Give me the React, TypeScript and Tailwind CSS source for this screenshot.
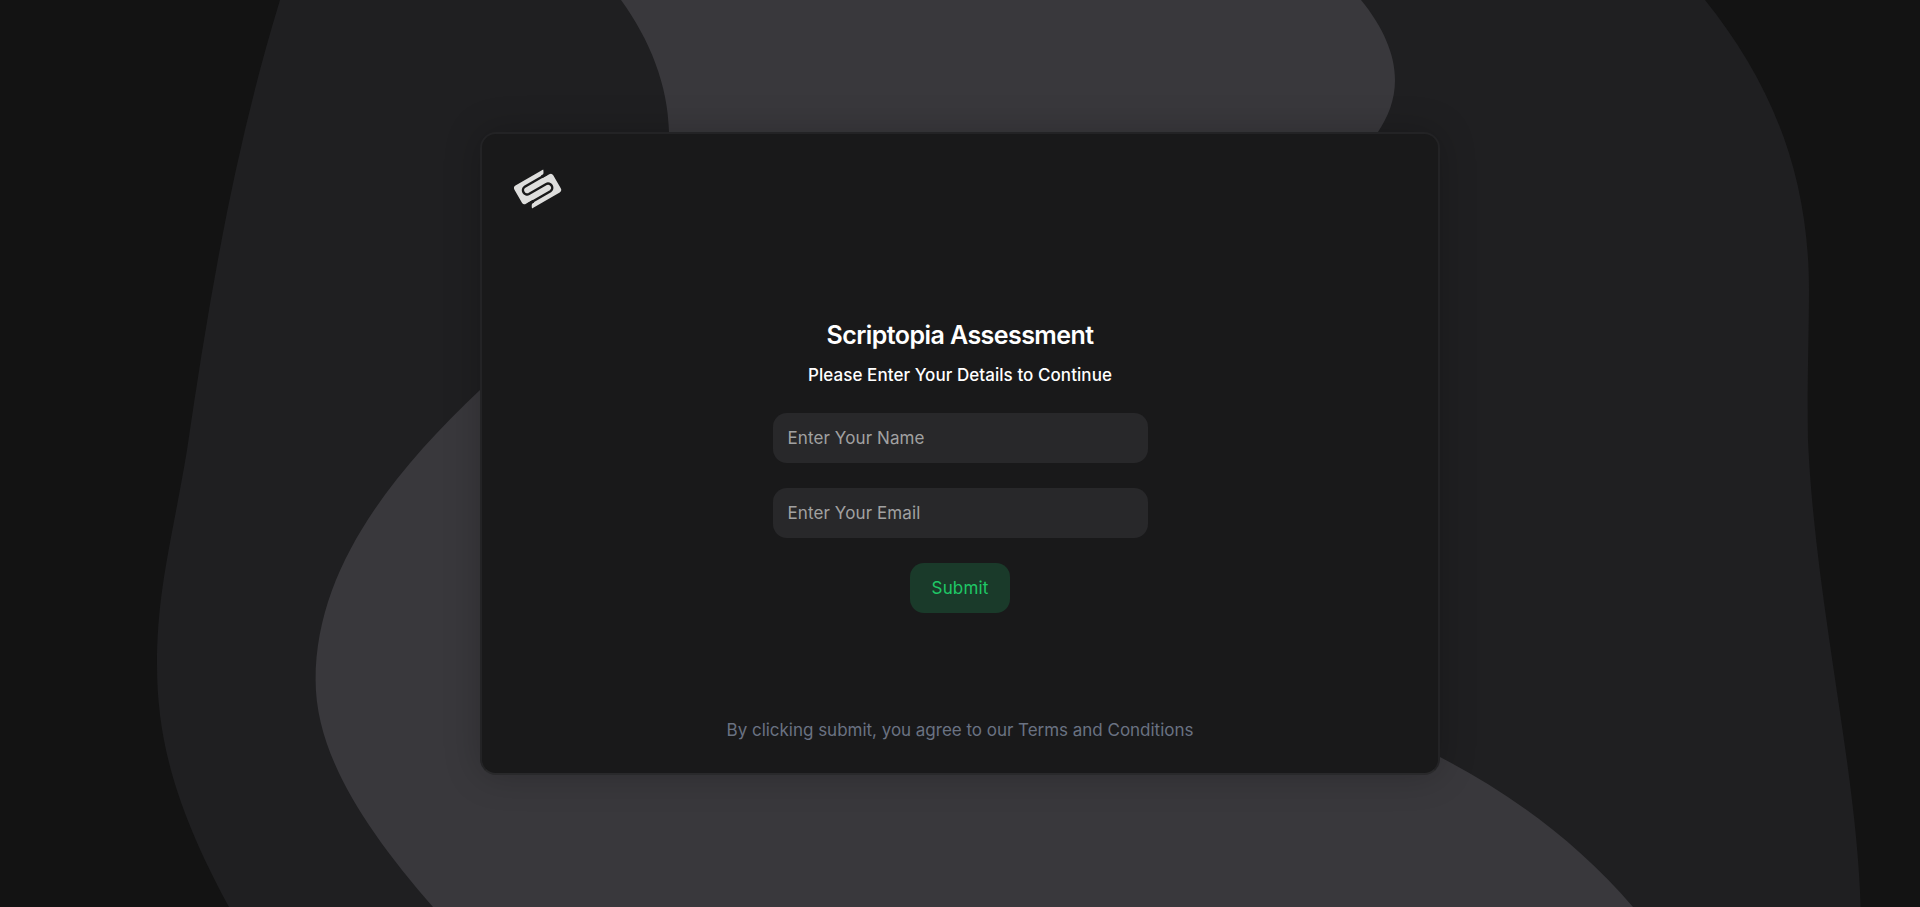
import React from "react";

const outerShape =
  "M280 0C234 150 209 300 187 450C172 540 157 590 157 665C157 745 179 815 229 907H1860.6C1857 770 1815 600 1808 440C1807 390 1809 330 1809 290C1809 170 1769 80 1705 0Z";

const innerShape =
  "M433 907C366 830 315.6 755 315.6 680C315.6 570 390 475 480 390C560 320 669 230 669 132C668 85 650 40 621 0H1361C1383 27 1395 54 1395 80C1395 100 1388 117 1378 132C1250 350 1300 680 1440 757C1513 795 1578 843 1633 907Z";

function Backdrop() {
  return (
    <svg className="absolute inset-0 h-full w-full" viewBox="0 0 1920 907" preserveAspectRatio="xMidYMid slice" aria-hidden="true">
      <path d={outerShape} fill="#1f1f21" />
      <path d={innerShape} fill="#39383c" />
    </svg>
  );
}

function Logo() {
  return (
    <svg className="h-[46px] w-12" viewBox="-23.6 -23 48 46" fill="none" aria-hidden="true">
      <g transform="rotate(-30) scale(0.97 1)">
        <path d="M15 -14H-18Q-21 -14 -21 -11V4Q-21 7 -18 7H10V-10H12.5Q14 -11 15 -14Z" fill="#dededd" />
        <path d="M-15 14H18Q21 14 21 11V-4Q21 -7 18 -7H-10V10H-12.5Q-14 11 -15 14Z" fill="#dededd" />
        <path d="M17 -8.33H-10.3A4.17 4.17 0 0 0 -10.3 0H10.3A4.17 4.17 0 0 1 10.3 8.33H-17" stroke="#19191a" strokeWidth="2.5" />
      </g>
    </svg>
  );
}

const inputClass =
  "h-[50px] w-full rounded-[14px] bg-[#28282a] px-[15px] tracking-[0.1px] placeholder-[#a1a1a1] outline-none";

export default function App() {
  return (
    <main className="relative flex h-screen w-full items-center justify-center overflow-hidden bg-[#131313] font-['Inter',sans-serif] text-[17px] leading-6 text-white">
      <Backdrop />
      <section className="relative flex h-[643px] w-[960px] flex-col items-center justify-between rounded-2xl border-2 border-[#232325] border-b-[#29292b] bg-[#19191a] p-8 pb-[31px] shadow-[0_0_36px_rgba(0,0,0,0.22)]">
        <div className="self-start">
          <Logo />
        </div>
        <form className="flex w-[375px] flex-col items-center pt-px" onSubmit={(e) => e.preventDefault()}>
          <h1 className="text-[25px] leading-8 font-semibold tracking-[-0.57px] whitespace-nowrap">Scriptopia Assessment</h1>
          <p className="mt-3 mb-[26px] font-[450] tracking-[0.06px] whitespace-nowrap">Please Enter Your Details to Continue</p>
          <div className="flex w-full flex-col items-center gap-[25px]">
            <input className={inputClass} placeholder="Enter Your Name" />
            <input className={inputClass} placeholder="Enter Your Email" />
            <button className="h-[50px] w-[100px] rounded-[14px] bg-[#1a3a2a] tracking-[0.15px] text-[#1fc866]">Submit</button>
          </div>
        </form>
        <p className="tracking-[-0.02px] text-gray-500">By clicking submit, you agree to our Terms and Conditions</p>
      </section>
    </main>
  );
}
